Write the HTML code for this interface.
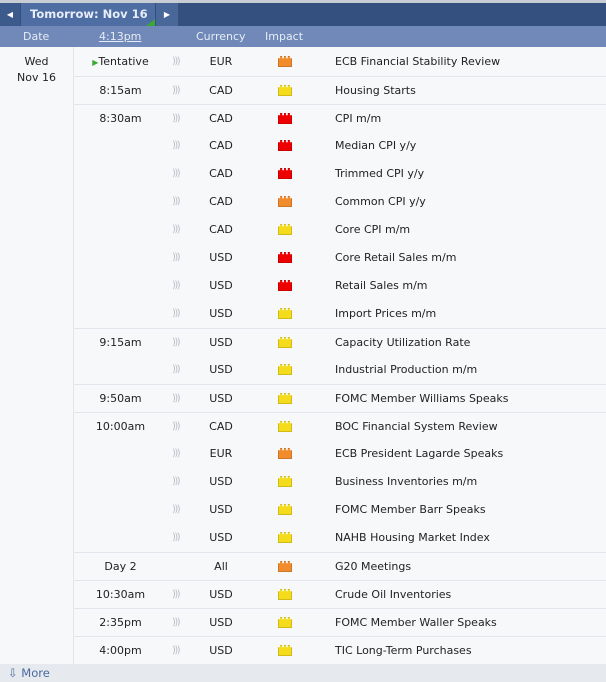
<!DOCTYPE html>
<html><head><style>
*{margin:0;padding:0;box-sizing:border-box}
body{width:606px;height:682px;overflow:hidden;background:#f7f8fa;font-family:"DejaVu Sans",Verdana,sans-serif;font-size:11px;color:#222;position:relative}
.top{position:absolute;left:0;top:0;width:606px;height:3px;background:#c8ccd4}
.bar{position:absolute;left:0;top:3px;width:606px;height:23px;background:#34507f}
.btn{position:absolute;top:3px;height:23px;background:#4a679a;color:#fff;font-size:8px;line-height:23px;text-align:center}
.tab{position:absolute;left:21px;top:3px;width:134px;height:23px;background:#4d6da3;color:#e8eef8;font-weight:bold;font-size:11.5px;line-height:23px;padding-left:9px}
.sub{position:absolute;left:0;top:26px;width:606px;height:21px;background:#7089b9;color:#e6ecf6;font-size:11px;line-height:21px}
.sub span{position:absolute}
.row{position:absolute;left:73px;width:533px;height:28px;line-height:28px}
.row.b{border-top:1px solid #e2e6ec}
.row span{position:absolute;top:0}
.t{left:0;width:95px;text-align:center}
.s{left:99px;color:#b8bec8;font-size:10px;letter-spacing:-1.5px}
.c{left:124px;width:48px;text-align:center}
.e{left:262px}
.i{left:205px;top:8px!important;width:14px;height:11px;border:1px solid rgba(0,0,0,.15);clip-path:polygon(0 20%,15% 20%,15% 0,30% 0,30% 20%,43% 20%,43% 0,57% 0,57% 20%,70% 20%,70% 0,85% 0,85% 20%,100% 20%,100% 100%,0 100%)}
.r{background:#e00}.o{background:#f08c2c}.y{background:#f4dc1c}
.dl{position:absolute;left:73px;top:47px;width:1px;height:617px;background:#e2e6ec}
.more{position:absolute;left:0;top:664px;width:606px;height:18px;background:#e6e9ee;color:#4a6aa0;font-size:11.5px;line-height:18px;padding-left:8px}
</style></head><body>
<div class="top"></div><div class="bar"></div>
<div class="btn" style="left:0;width:20px;background:#3d5a8c">◀</div>
<div class="tab">Tomorrow: Nov 16<div style="position:absolute;right:0;bottom:0;width:0;height:0;border-left:9px solid transparent;border-bottom:7px solid #3aa832"></div></div>
<div class="btn" style="left:156px;width:22px">▶</div>
<div class="sub"><span style="left:23px">Date</span><span style="left:99px;text-decoration:underline">4:13pm</span><span style="left:196px">Currency</span><span style="left:265px">Impact</span></div>
<div style="position:absolute;left:0;top:54px;width:73px;text-align:center;line-height:16px">Wed<br>Nov 16</div>
<div class="dl"></div>
<div class="row" style="top:48px"><span class="t"><span style="color:#3aa832;position:static;font-size:8px">▶</span>Tentative</span><span class="s">)))</span><span class="c">EUR</span><span class="i o"></span><span class="e">ECB Financial Stability Review</span></div>
<div class="row b" style="top:76px"><span class="t">8:15am</span><span class="s">)))</span><span class="c">CAD</span><span class="i y"></span><span class="e">Housing Starts</span></div>
<div class="row b" style="top:104px"><span class="t">8:30am</span><span class="s">)))</span><span class="c">CAD</span><span class="i r"></span><span class="e">CPI m/m</span></div>
<div class="row" style="top:132px"><span class="s">)))</span><span class="c">CAD</span><span class="i r"></span><span class="e">Median CPI y/y</span></div>
<div class="row" style="top:160px"><span class="s">)))</span><span class="c">CAD</span><span class="i r"></span><span class="e">Trimmed CPI y/y</span></div>
<div class="row" style="top:188px"><span class="s">)))</span><span class="c">CAD</span><span class="i o"></span><span class="e">Common CPI y/y</span></div>
<div class="row" style="top:216px"><span class="s">)))</span><span class="c">CAD</span><span class="i y"></span><span class="e">Core CPI m/m</span></div>
<div class="row" style="top:244px"><span class="s">)))</span><span class="c">USD</span><span class="i r"></span><span class="e">Core Retail Sales m/m</span></div>
<div class="row" style="top:272px"><span class="s">)))</span><span class="c">USD</span><span class="i r"></span><span class="e">Retail Sales m/m</span></div>
<div class="row" style="top:300px"><span class="s">)))</span><span class="c">USD</span><span class="i y"></span><span class="e">Import Prices m/m</span></div>
<div class="row b" style="top:328px"><span class="t">9:15am</span><span class="s">)))</span><span class="c">USD</span><span class="i y"></span><span class="e">Capacity Utilization Rate</span></div>
<div class="row" style="top:356px"><span class="s">)))</span><span class="c">USD</span><span class="i y"></span><span class="e">Industrial Production m/m</span></div>
<div class="row b" style="top:384px"><span class="t">9:50am</span><span class="s">)))</span><span class="c">USD</span><span class="i y"></span><span class="e">FOMC Member Williams Speaks</span></div>
<div class="row b" style="top:412px"><span class="t">10:00am</span><span class="s">)))</span><span class="c">CAD</span><span class="i y"></span><span class="e">BOC Financial System Review</span></div>
<div class="row" style="top:440px"><span class="s">)))</span><span class="c">EUR</span><span class="i o"></span><span class="e">ECB President Lagarde Speaks</span></div>
<div class="row" style="top:468px"><span class="s">)))</span><span class="c">USD</span><span class="i y"></span><span class="e">Business Inventories m/m</span></div>
<div class="row" style="top:496px"><span class="s">)))</span><span class="c">USD</span><span class="i y"></span><span class="e">FOMC Member Barr Speaks</span></div>
<div class="row" style="top:524px"><span class="s">)))</span><span class="c">USD</span><span class="i y"></span><span class="e">NAHB Housing Market Index</span></div>
<div class="row b" style="top:552px"><span class="t">Day 2</span><span class="c">All</span><span class="i o"></span><span class="e">G20 Meetings</span></div>
<div class="row b" style="top:580px"><span class="t">10:30am</span><span class="s">)))</span><span class="c">USD</span><span class="i y"></span><span class="e">Crude Oil Inventories</span></div>
<div class="row b" style="top:608px"><span class="t">2:35pm</span><span class="s">)))</span><span class="c">USD</span><span class="i y"></span><span class="e">FOMC Member Waller Speaks</span></div>
<div class="row b" style="top:636px"><span class="t">4:00pm</span><span class="s">)))</span><span class="c">USD</span><span class="i y"></span><span class="e">TIC Long-Term Purchases</span></div>
<div class="more">⇩ More</div>
</body></html>
